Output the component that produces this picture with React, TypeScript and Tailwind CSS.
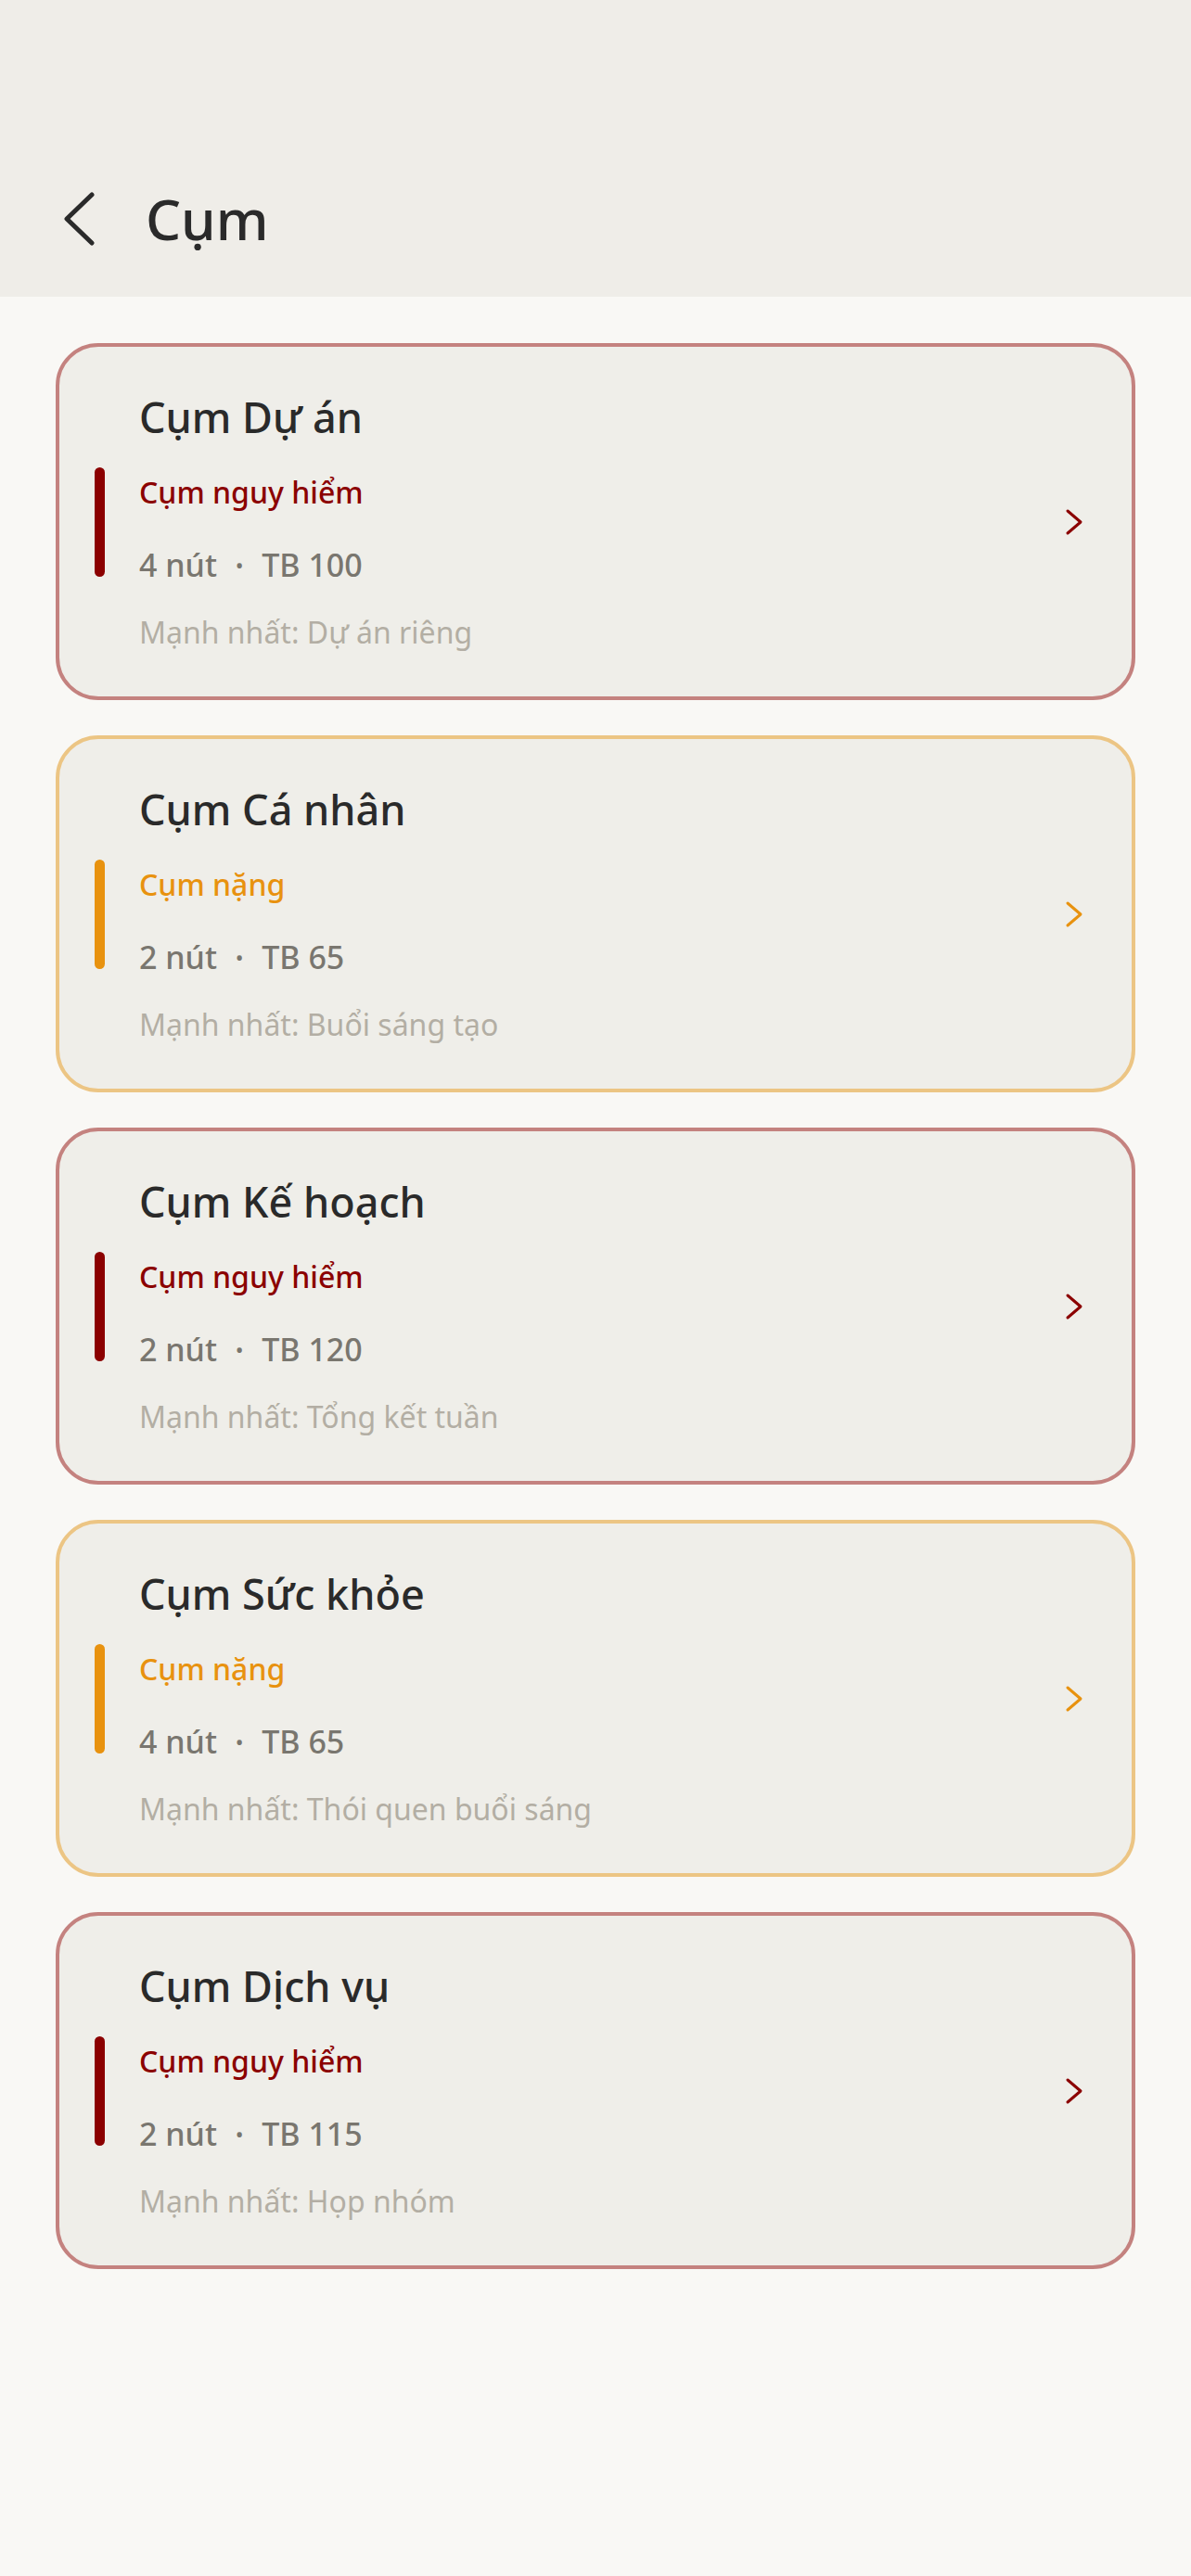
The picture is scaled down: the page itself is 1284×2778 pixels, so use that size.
import { ReactNode } from "react";

type Level = "danger" | "heavy";

interface Cluster {
    name: string;
    level: Level;
    nodes: number;
    avg: number;
    strongest: string;
}

const clusters: Cluster[] = [
    { name: "Cụm Dự án", level: "danger", nodes: 4, avg: 100, strongest: "Dự án riêng" },
    { name: "Cụm Cá nhân", level: "heavy", nodes: 2, avg: 65, strongest: "Buổi sáng tạo" },
    { name: "Cụm Kế hoạch", level: "danger", nodes: 2, avg: 120, strongest: "Tổng kết tuần" },
    { name: "Cụm Sức khỏe", level: "heavy", nodes: 4, avg: 65, strongest: "Thói quen buổi sáng" },
    { name: "Cụm Dịch vụ", level: "danger", nodes: 2, avg: 115, strongest: "Họp nhóm" },
];

const styles = {
    danger: {
        border: "border-[#c4827f]",
        bar: "bg-[#8b0000]",
        text: "text-[#8b0000]",
        stroke: "#8b0000",
        label: "Cụm nguy hiểm",
    },
    heavy: {
        border: "border-[#ecc584]",
        bar: "bg-[#e8920f]",
        text: "text-[#e8920f]",
        stroke: "#e8920f",
        label: "Cụm nặng",
    },
};

function Chevron({ color }: { color: string }) {
    return (
        <svg width="20" height="30" viewBox="0 0 20 30" fill="none">
            <path d="M3 3 L17 15 L3 27" stroke={color} strokeWidth="3" strokeLinecap="round" strokeLinejoin="round" />
        </svg>
    );
}

function Row({ children, className }: { children: ReactNode; className: string }) {
    return <p className={`whitespace-nowrap ${className}`}>{children}</p>;
}

function ClusterCard({ c }: { c: Cluster }) {
    const s = styles[c.level];
    return (
        <div className={`h-[385px] rounded-[46px] border-4 ${s.border} bg-[#efeee9] flex items-center pl-[38px] pr-[52px]`}>
            <div className="flex-1 grid grid-cols-[11px_1fr] gap-x-[37px] pt-[1px]">
                <div />
                <Row className="text-[45px] leading-[56px] font-medium text-[#2a2a2a]">{c.name}</Row>

                <div className={`row-span-2 mt-[26px] h-[118px] w-[11px] rounded-full ${s.bar}`} />
                <Row className={`mt-[29px] text-[32px] leading-[48px] font-medium ${s.text}`}>{s.label}</Row>
                <div className="mt-[30px] flex items-center gap-[20px] text-[34px] leading-[48px] font-medium text-[#79766f]">
                    <span>{c.nodes} nút</span>
                    <span className="text-[22px]">•</span>
                    <span>TB {c.avg}</span>
                </div>

                <div />
                <Row className="mt-[27px] text-[32px] leading-[44px] text-[#b3aea4]">Mạnh nhất: {c.strongest}</Row>
            </div>
            <Chevron color={s.stroke} />
        </div>
    );
}

export default function App() {
    return (
        <div className="min-h-[2778px] bg-[#f9f8f5] font-['Noto_Sans',sans-serif]">
            <header className="h-[320px] bg-[#efede8] pt-[196px]">
                <div className="flex h-[80px] items-center">
                    <svg className="ml-[67px]" width="36" height="58" viewBox="0 0 36 58" fill="none">
                        <path d="M32 3 L5 29 L32 55" stroke="#2a2a2a" strokeWidth="5" strokeLinecap="round" strokeLinejoin="round" />
                    </svg>
                    <h1 className="ml-[54px] text-[60px] leading-[80px] font-medium text-[#2a2a2a]">Cụm</h1>
                </div>
            </header>

            <main className="flex flex-col gap-[38px] px-[60px] pt-[50px] pb-[80px]">
                {clusters.map((c) => (
                    <ClusterCard key={c.name} c={c} />
                ))}
            </main>
        </div>
    );
}
